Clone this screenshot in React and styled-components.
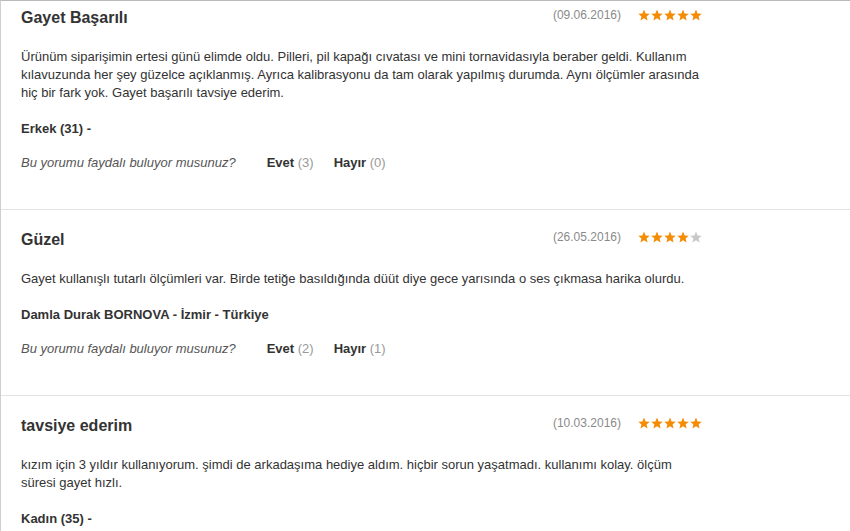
import React from 'react';
import styled, { createGlobalStyle } from 'styled-components';

const Global = createGlobalStyle`
  html, body {
    margin: 0;
    padding: 0;
    background: #fff;
    overflow: hidden;
  }
  body {
    font-family: "Liberation Sans", Arial, sans-serif;
    color: #333;
  }
`;

const Wrapper = styled.div`
  height: 531px;
  overflow: hidden;
  border-top: 1px solid #b9b9b9;
  border-left: 1px solid #cfcfcf;
  box-sizing: border-box;
`;

const Review = styled.div`
  border-top: ${p => (p.$first ? 'none' : '1px solid #e3e3e3')};
  padding: ${p => (p.$first ? '7px' : '20px')} 0 37px 20px;
`;

const Inner = styled.div`
  width: 681px;
`;

const Header = styled.div`
  display: flex;
  justify-content: space-between;
  align-items: flex-start;
  height: 20px;
`;

const Title = styled.h3`
  margin: 0;
  font-size: 16px;
  line-height: 20px;
  font-weight: bold;
  color: #333;
`;

const Meta = styled.div`
  display: flex;
  align-items: center;
  gap: 17px;
  height: 14px;
`;

const DateText = styled.span`
  font-size: 12px;
  color: #8a8a8a;
`;

const Stars = styled.div`
  display: flex;
  gap: 1px;
`;

const Body = styled.p`
  margin: 20px 0 0;
  font-size: 13px;
  line-height: 18px;
  color: #333;
`;

const Author = styled.div`
  margin-top: 18px;
  font-size: 13px;
  line-height: 18px;
  font-weight: bold;
  color: #333;
`;

const Helpful = styled.div`
  display: flex;
  align-items: center;
  margin-top: 16px;
  font-size: 13px;
  line-height: 18px;
`;

const Question = styled.span`
  font-style: italic;
  color: #555;
  margin-right: 31px;
`;

const Vote = styled.span`
  font-weight: bold;
  color: #333;
  margin-right: 20px;
  cursor: pointer;
`;

const Count = styled.span`
  font-weight: normal;
  color: #999;
`;

const Star = ({ on }) => (
  <svg width="12" height="12" viewBox="0 0 24 24">
    <path
      d="M12 1.2l3.2 7.6 8.2.7-6.2 5.4 1.9 8-7.1-4.3-7.1 4.3 1.9-8L.6 9.5l8.2-.7z"
      fill={on ? '#f48c06' : '#c8c8c8'}
    />
  </svg>
);

const reviews = [
  {
    title: 'Gayet Başarılı',
    date: '(09.06.2016)',
    rating: 5,
    text: 'Ürünüm siparişimin ertesi günü elimde oldu. Pilleri, pil kapağı cıvatası ve mini tornavidasıyla beraber geldi. Kullanım kılavuzunda her şey güzelce açıklanmış. Ayrıca kalibrasyonu da tam olarak yapılmış durumda. Aynı ölçümler arasında hiç bir fark yok. Gayet başarılı tavsiye ederim.',
    author: 'Erkek (31) -',
    yes: 3,
    no: 0,
  },
  {
    title: 'Güzel',
    date: '(26.05.2016)',
    rating: 4,
    text: 'Gayet kullanışlı tutarlı ölçümleri var. Birde tetiğe basıldığında düüt diye gece yarısında o ses çıkmasa harika olurdu.',
    author: 'Damla Durak BORNOVA - İzmir - Türkiye',
    yes: 2,
    no: 1,
  },
  {
    title: 'tavsiye ederim',
    date: '(10.03.2016)',
    rating: 5,
    text: 'kızım için 3 yıldır kullanıyorum. şimdi de arkadaşıma hediye aldım. hiçbir sorun yaşatmadı. kullanımı kolay. ölçüm süresi gayet hızlı.',
    author: 'Kadın (35) -',
    yes: 1,
    no: 0,
  },
];

const App = () => {
  return (
    <>
      <Global />
      <Wrapper>
        {reviews.map((r, i) => (
          <Review key={i} $first={i === 0}>
            <Inner>
              <Header>
                <Title>{r.title}</Title>
                <Meta>
                  <DateText>{r.date}</DateText>
                  <Stars>
                    {[1, 2, 3, 4, 5].map(n => (
                      <Star key={n} on={n <= r.rating} />
                    ))}
                  </Stars>
                </Meta>
              </Header>
              <Body>{r.text}</Body>
              <Author>{r.author}</Author>
              <Helpful>
                <Question>Bu yorumu faydalı buluyor musunuz?</Question>
                <Vote>
                  Evet <Count>({r.yes})</Count>
                </Vote>
                <Vote>
                  Hayır <Count>({r.no})</Count>
                </Vote>
              </Helpful>
            </Inner>
          </Review>
        ))}
      </Wrapper>
    </>
  );
};

export default App;
